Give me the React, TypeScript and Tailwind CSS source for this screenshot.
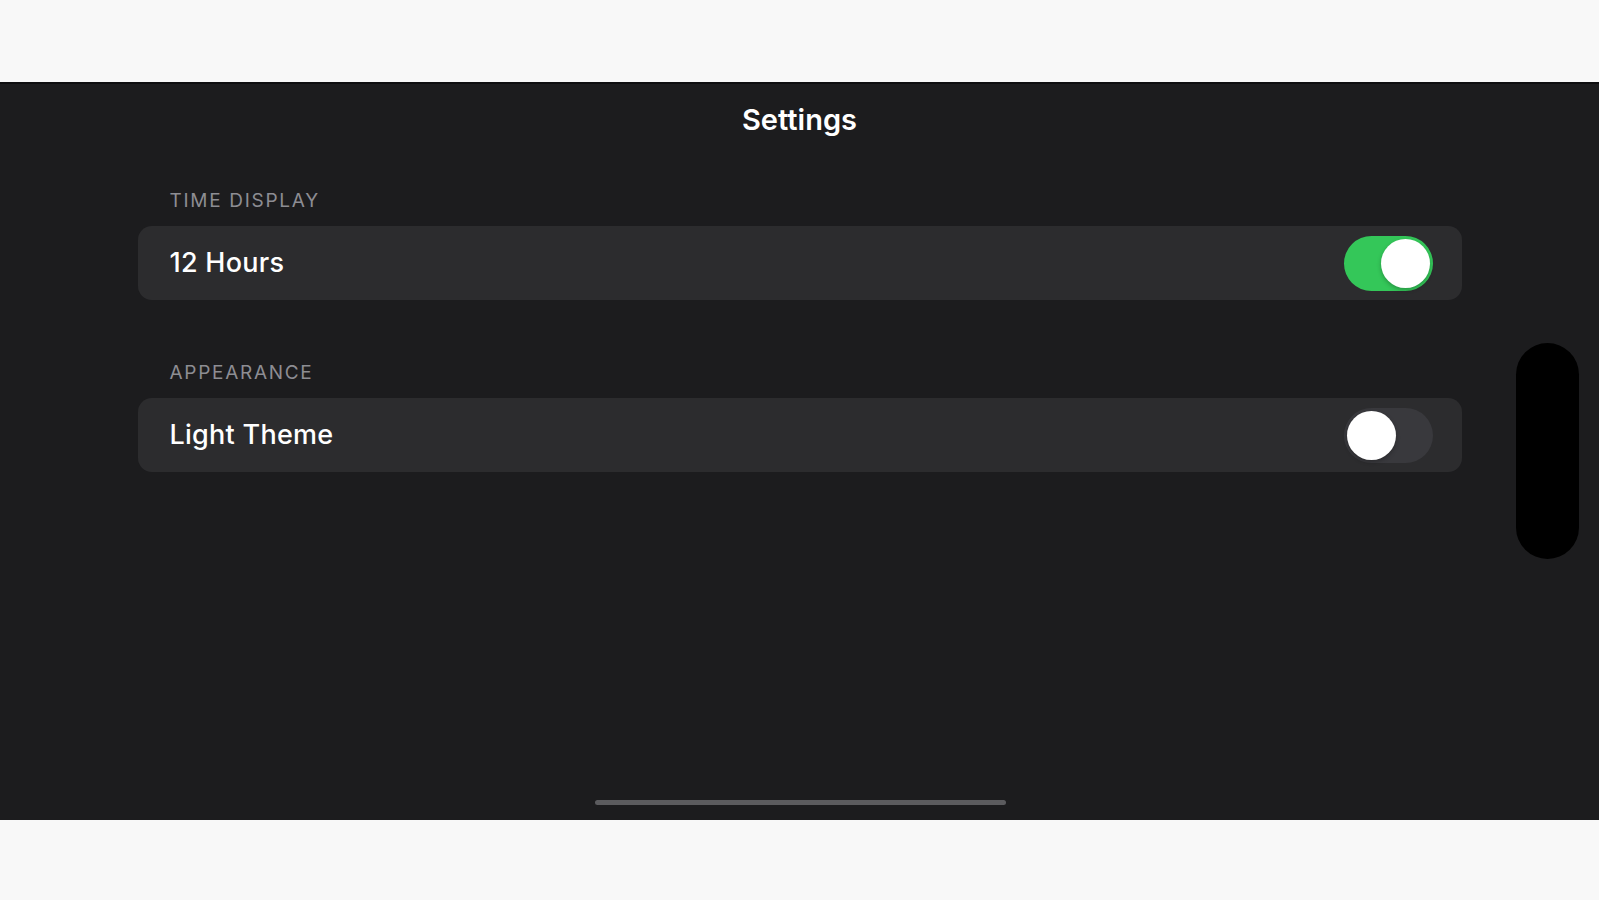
import { useState } from 'react'

function Toggle({ on, onChange }: { on: boolean; onChange: () => void }) {
  return (
    <button
      onClick={onChange}
      className={`relative flex h-[55px] w-[89px] shrink-0 items-center rounded-full p-[3px] transition-colors ${
        on ? 'justify-end bg-[#34c759]' : 'justify-start bg-[#39393d]'
      }`}
    >
      <span className="block h-[49px] w-[49px] rounded-full bg-white shadow-[0_2px_4px_rgba(0,0,0,0.25)]" />
    </button>
  )
}

function Section({ label, title, on, onChange }: { label: string; title: string; on: boolean; onChange: () => void }) {
  return (
    <div className="flex flex-col">
      <p className="px-8 pt-px text-[19px] leading-[24px] uppercase text-[#8d8d93] tracking-[0.09em]">{label}</p>
      <div className="mt-[13px] flex h-[74px] items-center justify-between rounded-[14px] bg-[#2c2c2e] pl-8 pr-[29px]">
        <span className="text-[27px] font-medium leading-[32px] tracking-[0.01em] text-white">{title}</span>
        <Toggle on={on} onChange={onChange} />
      </div>
    </div>
  )
}

export default function App() {
  const [twelveHours, setTwelveHours] = useState(true)
  const [lightTheme, setLightTheme] = useState(false)

  return (
    <div className="flex h-[900px] w-full flex-col bg-[#f8f8f8] font-['Inter',sans-serif]">
      <div className="h-[82px] shrink-0" />
      <main className="relative h-[738px] shrink-0 border-t-2 border-[#0e0e10] bg-[#1c1c1e]">
        <h1 className="pt-[19px] text-center text-[29px] font-semibold leading-[34px] text-white">Settings</h1>

        <div className="mx-auto mt-[51px] flex w-[1324px] flex-col gap-[60px]">
          <Section label="Time Display" title="12 Hours" on={twelveHours} onChange={() => setTwelveHours((v) => !v)} />
          <Section label="Appearance" title="Light Theme" on={lightTheme} onChange={() => setLightTheme((v) => !v)} />
        </div>

        {/* dynamic island, landscape */}
        <div className="absolute right-[20px] top-[259px] h-[216px] w-[63px] rounded-full bg-black" />
        {/* home indicator */}
        <div className="absolute bottom-[15px] left-[595px] h-[5px] w-[411px] rounded-full bg-[#5b5b5e]" />
      </main>
      <div className="flex-1" />
    </div>
  )
}
